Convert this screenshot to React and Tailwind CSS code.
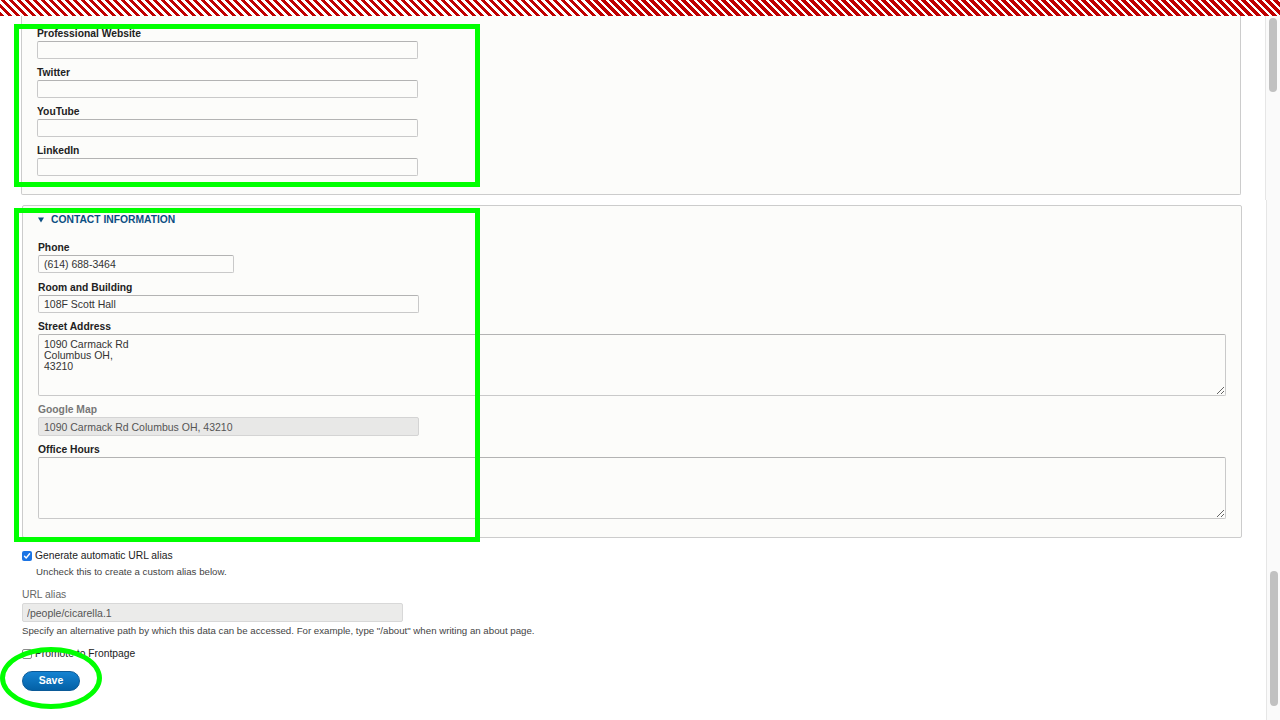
import React from "react";

const inputBase =
  "block h-[18px] border border-[#c9c9c9] border-t-[#b3b3b3] bg-[#fcfcfa] rounded-[2px] pl-[5px] text-[10.5px] text-[#333] leading-[16px] outline-none";
const textareaBase =
  "block w-full h-[62px] border border-[#c9c9c9] border-t-[#b3b3b3] bg-[#fcfcfa] rounded-[2px] pl-[5px] pt-[4px] text-[10.5px] text-[#333] leading-[11px] outline-none resize-y";

function Label({ children, muted }) {
  return (
    <div
      className={
        "text-[10.3px] font-bold leading-[15px] " +
        (muted ? "text-[#777]" : "text-[#222]")
      }
    >
      {children}
    </div>
  );
}

function Field({ label, children, muted, className = "" }) {
  return (
    <div className={"flex flex-col " + className}>
      <Label muted={muted}>{label}</Label>
      {children}
    </div>
  );
}

function Checkbox({ checked }) {
  if (checked) {
    return (
      <span className="flex h-[10px] w-[10px] items-center justify-center rounded-[2px] bg-[#1b74e4]">
        <svg width="8" height="8" viewBox="0 0 8 8">
          <path d="M1.5 4.2 L3.2 6 L6.6 1.8" fill="none" stroke="#fff" strokeWidth="1.4" strokeLinecap="round" strokeLinejoin="round" />
        </svg>
      </span>
    );
  }
  return <span className="block h-[10px] w-[10px] rounded-[2px] border border-[#8a8a8a] bg-white" />;
}

export default function App() {
  return (
    <div className="relative h-[720px] w-[1280px] overflow-hidden bg-white font-['Liberation_Sans',Arial,sans-serif]">
      <div className="h-[16px] w-full bg-[repeating-linear-gradient(45deg,#c00000_0px,#c00000_3.3px,#ffffff_3.3px,#ffffff_5.66px)]" />
      <div className="flex h-[704px]">
        <main className="flex-1">
          {/* Fieldset 1 (top scrolled off) */}
          <div className="ml-[21px] w-[1220px] rounded-b-[2px] border-x border-b border-[#cccccc] bg-[#fcfcfa] px-[15px] pt-[10px] pb-[18px]">
            <div className="flex flex-col gap-[6px]">
              <Field label="Professional Website">
                <input className={inputBase + " w-[381px]"} defaultValue="" />
              </Field>
              <Field label="Twitter">
                <input className={inputBase + " w-[381px]"} defaultValue="" />
              </Field>
              <Field label="YouTube">
                <input className={inputBase + " w-[381px]"} defaultValue="" />
              </Field>
              <Field label="LinkedIn">
                <input className={inputBase + " w-[381px]"} defaultValue="" />
              </Field>
            </div>
          </div>

          {/* Fieldset 2: Contact information */}
          <div className="mt-[10px] ml-[22px] w-[1220px] rounded-[2px] border border-[#cccccc] bg-[#fcfcfa] px-[15px] pt-[7px] pb-[18px]">
            <div className="flex h-[14px] items-center gap-[7px] text-[10.3px] font-bold leading-[14px] text-[#0c4f82]">
              <svg width="6" height="6" viewBox="0 0 6 6">
                <polygon points="0,0.5 6,0.5 3,5.5" fill="#0c4f82" />
              </svg>
              <span>CONTACT INFORMATION</span>
            </div>
            <div className="mt-[13px] flex flex-col gap-[6px]">
              <Field label="Phone" className="mb-px">
                <input className={inputBase + " w-[196px]"} defaultValue="(614) 688-3464" />
              </Field>
              <Field label="Room and Building">
                <input className={inputBase + " w-[381px]"} defaultValue="108F Scott Hall" />
              </Field>
              <Field label="Street Address">
                <textarea className={textareaBase} defaultValue={"1090 Carmack Rd\nColumbus OH,\n43210"} />
              </Field>
              <Field label="Google Map" muted>
                <input
                  className="block h-[19px] w-[381px] rounded-[2px] border border-[#d4d4d4] bg-[#e8e8e7] pl-[5px] text-[10.5px] leading-[17px] text-[#555] outline-none"
                  defaultValue="1090 Carmack Rd Columbus OH, 43210"
                  disabled
                />
              </Field>
              <Field label="Office Hours">
                <textarea className={textareaBase} defaultValue="" />
              </Field>
            </div>
          </div>

          {/* Below fieldsets */}
          <div className="ml-[22px] mt-[11px] flex flex-col">
            <div className="flex h-[14px] items-center gap-[3px]">
              <Checkbox checked />
              <span className="text-[10.3px] leading-[14px] text-[#222]">Generate automatic URL alias</span>
            </div>
            <div className="mt-[3px] ml-[14px] text-[9.7px] leading-[12px] text-[#444]">
              Uncheck this to create a custom alias below.
            </div>
            <div className="mt-[10px] text-[10.3px] leading-[14px] text-[#666]">URL alias</div>
            <input
              className="mt-px block h-[19px] w-[381px] rounded-[2px] border border-[#d8d8d8] bg-[#ebebea] pl-[4px] text-[10.5px] leading-[17px] text-[#555] outline-none"
              defaultValue="/people/cicarella.1"
              disabled
            />
            <div className="mt-[3px] text-[9.7px] leading-[12px] text-[#444]">
              Specify an alternative path by which this data can be accessed. For example, type "/about" when writing an about page.
            </div>
            <div className="mt-[10px] flex h-[14px] items-center gap-[3px]">
              <Checkbox />
              <span className="text-[10.3px] leading-[14px] text-[#222]">Promote to Frontpage</span>
            </div>
            <div className="mt-[10px]">
              <button className="flex h-[20px] w-[58px] items-center justify-center rounded-full border border-[#0b5a98] bg-gradient-to-b from-[#1583d2] to-[#0461a6] text-[10.5px] font-bold text-white">
                Save
              </button>
            </div>
          </div>
        </main>

        {/* Scrollbar column */}
        <aside className="flex w-[15px] flex-col">
          <div className="h-[184px] border-l border-[#e6e6e6] bg-[#fafafa] pl-[3px] pt-[2px]">
            <div className="h-[74px] w-[8px] rounded-full bg-[#c1c1c1]" />
          </div>
          <div className="ml-px flex flex-1 flex-col justify-end border-l border-[#e6e6e6] bg-[#fafafa] pl-[3px] pb-[14px]">
            <div className="h-[135px] w-[8px] rounded-full bg-[#c1c1c1]" />
          </div>
        </aside>
      </div>

      {/* Annotation overlays */}
      <div className="pointer-events-none absolute left-[14px] top-[24px] h-[163px] w-[466px] border-[5px] border-[#00ff00]" />
      <div className="pointer-events-none absolute left-[14px] top-[208px] h-[334px] w-[466px] border-[5px] border-[#00ff00]" />
      <div className="pointer-events-none absolute left-[0px] top-[647px] h-[62px] w-[102px] rounded-[50%] border-[5px] border-[#00ff00]" />
    </div>
  );
}
